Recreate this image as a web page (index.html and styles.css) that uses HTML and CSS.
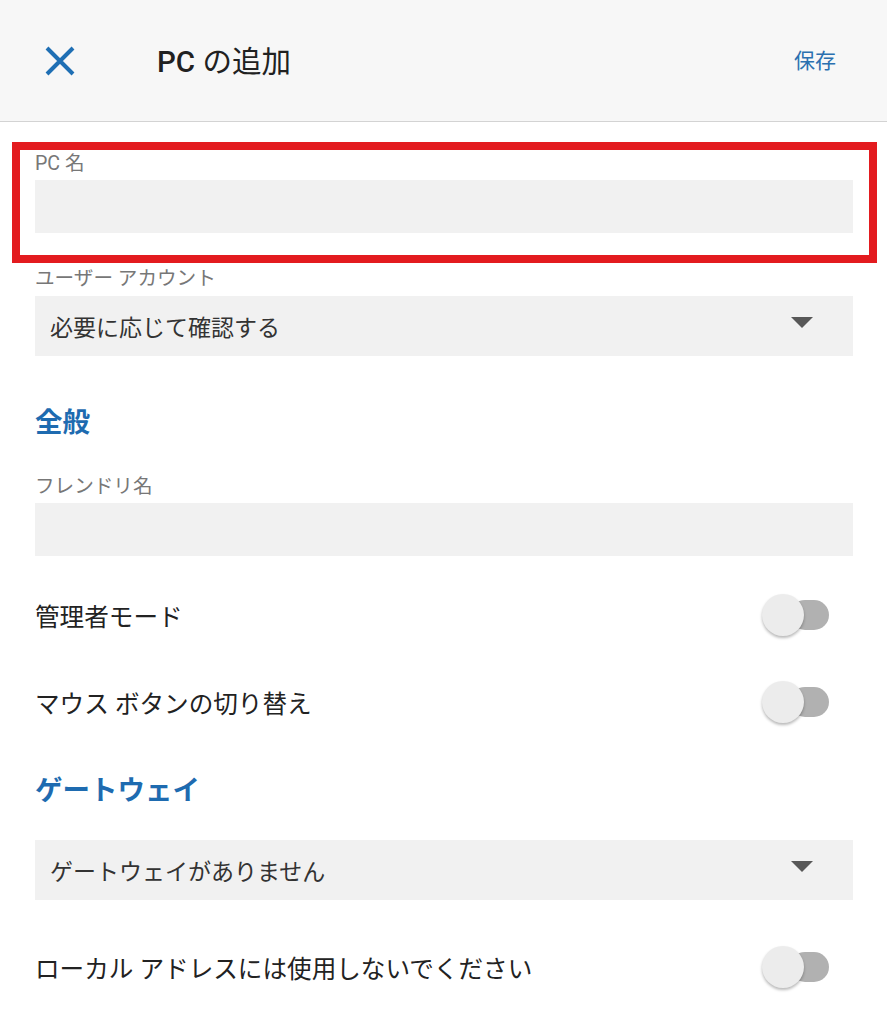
FILE: index.html
```html
<!DOCTYPE html>
<html lang="ja">
<head>
<meta charset="utf-8">
<title>PC の追加</title>
<link rel="stylesheet" href="styles.css">
</head>
<body>
<header class="appbar">
  <button class="close" aria-label="閉じる">
    <svg width="30" height="30" viewBox="0 0 30 30"><path d="M2 2 L28 28 M28 2 L2 28" stroke="#1f6fb4" stroke-width="4" stroke-linecap="butt" fill="none"/></svg>
  </button>
  <h1 class="title"><span class="latin">PC</span> の追加</h1>
  <span class="save">保存</span>
</header>
<main class="content">
  <div class="highlight">
    <div class="label">PC 名</div>
    <div class="input"></div>
  </div>
  <div class="label label-gap">ユーザー アカウント</div>
  <div class="select"><span>必要に応じて確認する</span><span class="caret"></span></div>

  <h2 class="section first">全般</h2>
  <div class="label">フレンドリ名</div>
  <div class="input"></div>

  <div class="row row-first"><span>管理者モード</span><span class="toggle"><span class="track"></span><span class="thumb"></span></span></div>
  <div class="row"><span>マウス ボタンの切り替え</span><span class="toggle"><span class="track"></span><span class="thumb"></span></span></div>

  <h2 class="section second">ゲートウェイ</h2>
  <div class="select select-gw"><span>ゲートウェイがありません</span><span class="caret"></span></div>

  <div class="row row-last"><span>ローカル アドレスには使用しないでください</span><span class="toggle"><span class="track"></span><span class="thumb"></span></span></div>
</main>
</body>
</html>
```
FILE: styles.css
```css
* { box-sizing: border-box; }
html, body { margin: 0; padding: 0; background: #ffffff; }
body {
  font-family: Roboto, "Noto Sans CJK JP", sans-serif;
  color: #212121;
  width: 887px;
  height: 1024px;
  overflow: hidden;
}
.appbar {
  height: 122px;
  background: #f7f7f7;
  border-bottom: 1px solid #d3d3d3;
  display: flex;
  align-items: center;
  padding: 0 51px 0 45px;
}
.close {
  border: 0;
  background: none;
  padding: 0;
  width: 30px;
  height: 30px;
  display: block;
}
.close svg { display: block; }
.title {
  margin: 3px 0 0 82px;
  font-size: 29.5px;
  font-weight: 400;
  color: #212121;
  flex: 1;
  line-height: 36px;
}
.title .latin { font-weight: 500; }
.save {
  font-size: 21px;
  color: #2a70b0;
  line-height: 30px;
}
.content {
  padding: 0 34px 0 35px;
}
.highlight {
  margin: 20px -24px 0 -23px;
  border: 8px solid #e31b1f;
  padding: 1px 16px 22px 15px;
}
.label {
  font-size: 19.6px;
  line-height: 26px;
  color: #777777;
}
.label-gap { margin-top: 3px; }
.input {
  margin-top: 3px;
  height: 53px;
  background: #f1f1f1;
}
.select {
  margin-top: 4px;
  height: 60px;
  background: #f1f1f1;
  display: flex;
  align-items: center;
  justify-content: space-between;
  padding: 0 40px 0 15px;
  font-size: 23px;
  color: #333333;
}
.caret {
  width: 0;
  height: 0;
  border-left: 11px solid transparent;
  border-right: 11px solid transparent;
  border-top: 11px solid #585858;
  margin-top: -8px;
}
.section {
  margin: 0;
  font-size: 27.5px;
  font-weight: 700;
  color: #1e6bb0;
  line-height: 36px;
}
.section.first { margin-top: 49px; margin-bottom: 33px; }
.section.second { margin-top: 28px; margin-bottom: 31px; }
.select-gw { margin-top: 0; }
.row {
  height: 87px;
  display: flex;
  align-items: center;
  justify-content: space-between;
  font-size: 24.6px;
  color: #222222;
  padding-right: 24px;
}
.row-first { margin-top: 15px; }
.row-last { margin-top: 23px; }
.toggle {
  position: relative;
  width: 67px;
  height: 42px;
  display: block;
}
.track {
  position: absolute;
  left: 28px;
  top: 6px;
  width: 39px;
  height: 30px;
  border-radius: 15px;
  background: #b1b1b1;
}
.thumb {
  position: absolute;
  left: 0;
  top: 0;
  width: 42px;
  height: 42px;
  border-radius: 50%;
  background: #ececec;
  box-shadow: 0 2px 3px rgba(0,0,0,0.28);
}
```
